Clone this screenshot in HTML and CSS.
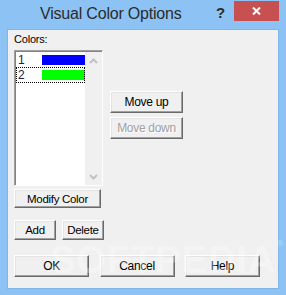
FILE: index.html
```html
<!DOCTYPE html>
<html lang="en">
    <head>
        <meta charset="UTF-8">
        <title>Visual Color Options</title>
        <link rel="stylesheet" href="styles.css">
    </head>
    <body>
        <div class="window">
            <div class="titlebar">
                <span class="title">Visual Color Options</span>
                <span class="help">?</span>
                <span class="close">
                    <svg width="9" height="8" viewBox="0 0 9 8">
                        <path d="M1 0.5 L8 7.5 M8 0.5 L1 7.5" stroke="#ffffff" stroke-width="2"/>
                    </svg>
                </span>
            </div>

            <div class="client">
                <div class="top">
                    <div class="left">
                        <div class="label">Colors:</div>
                        <div class="listbox">
                            <div class="items">
                                <div class="item"><span class="num">1</span><span class="swatch blue"></span></div>
                                <div class="item focus"><span class="num">2</span><span class="swatch green"></span></div>
                            </div>
                            <div class="scroll">
                                <svg width="9" height="6" viewBox="0 0 9 6">
                                    <path d="M1 5 L4.5 1.5 L8 5" fill="none" stroke="#c2c2c2" stroke-width="2"/>
                                </svg>
                                <svg width="9" height="6" viewBox="0 0 9 6">
                                    <path d="M1 1 L4.5 4.5 L8 1" fill="none" stroke="#c2c2c2" stroke-width="2"/>
                                </svg>
                            </div>
                        </div>
                        <button type="button" class="btn modify">Modify Color</button>
                        <div class="pair">
                            <button type="button" class="btn small">Add</button>
                            <button type="button" class="btn small">Delete</button>
                        </div>
                    </div>
                    <div class="right">
                        <button type="button" class="btn move">Move up</button>
                        <button type="button" class="btn move" disabled>Move down</button>
                    </div>
                </div>

                <div class="footer">
                    <button type="button" class="btn wide">OK</button>
                    <button type="button" class="btn wide">Cancel</button>
                    <button type="button" class="btn wide">Help</button>
                </div>
            </div>

            <!-- watermark from the screenshot site -->
            <div class="watermark">SOFTPEDIA<sup>®</sup></div>
        </div>
    </body>
</html>
```

FILE: styles.css
```css
*{
    margin: 0;
    padding: 0;
    box-sizing: border-box;
}
body{
    background-color: #8cc3f4;
    font-family: "Liberation Sans", Arial, sans-serif;
}
.window{
    position: relative;
    width: 286px;
    height: 295px;
    background-color: #8cc3f4;
    overflow: hidden;
}

/* title bar */
.titlebar{
    height: 30px;
    display: flex;
    align-items: flex-start;
}
.title{
    margin-left: 40px;
    margin-top: 5px;
    font-size: 16px;
    color: #2b2b2b;
    letter-spacing: -0.2px;
    width: 176px;
    white-space: nowrap;
}
.help{
    margin-top: 4px;
    font-size: 15px;
    font-weight: bold;
    color: #2b2b2b;
    width: 18px;
}
.close{
    margin-top: 1px;
    width: 45px;
    height: 20px;
    background-color: #c75050;
    display: flex;
    align-items: center;
    justify-content: center;
}

/* client area */
.client{
    margin: 0 8px;
    height: 258px;
    background-color: #f0f0f0;
    box-shadow: 0 0 0 1px #7fb6ea;
    padding: 0 6px;
    font-size: 11px;
    color: #000000;
}
.top{
    display: flex;
    height: 210px;
}
.left{
    width: 90px;
}
.label{
    padding-top: 3px;
    height: 20px;
    letter-spacing: -0.2px;
}
.listbox{
    width: 89px;
    height: 136px;
    display: flex;
    border: 1px solid;
    border-color: #a0a0a0 #ffffff #ffffff #a0a0a0;
    box-shadow: inset 1px 1px 0 #828282;
    background-color: #ffffff;
    padding: 1px 0 0 1px;
}
.items{
    width: 70px;
    padding-top: 1px;
}
.item{
    height: 14px;
    display: flex;
    align-items: center;
    padding-left: 2px;
}
.item.focus{
    height: 16px;
    outline: 1px dotted #000000;
    outline-offset: -1px;
}
.num{
    width: 24px;
    font-size: 12px;
    color: #2a1a3a;
}
.swatch{
    width: 43px;
    height: 10px;
}
.blue{
    background-color: #0000ff;
}
.green{
    background-color: #00ff00;
}
.scroll{
    width: 17px;
    background-color: #f0f0f0;
    display: flex;
    flex-direction: column;
    align-items: center;
    justify-content: space-between;
    padding: 6px 0 5px;
}

/* buttons */
.btn{
    font-family: "Liberation Sans", Arial, sans-serif;
    font-size: 11px;
    letter-spacing: -0.3px;
    color: #000000;
    background-color: #f0f0f0;
    border: 1px solid;
    border-color: #ffffff #696969 #696969 #ffffff;
    box-shadow: inset -1px -1px 0 #a0a0a0, inset 1px 1px 0 #e3e3e3;
    display: flex;
    align-items: center;
    justify-content: center;
}
.btn:disabled{
    color: #a0a0a0;
    text-shadow: 1px 1px 0 #ffffff;
}
.modify{
    margin-top: 3px;
    width: 87px;
    height: 19px;
    font-size: 11.5px;
}
.pair{
    margin-top: 12px;
    display: flex;
    gap: 6px;
}
.small{
    width: 42px;
    height: 20px;
    font-size: 11.5px;
}
.right{
    margin-left: 6px;
    padding-top: 61px;
    display: flex;
    flex-direction: column;
    gap: 4px;
}
.move{
    width: 73px;
    height: 22px;
    font-size: 12px;
}
.footer{
    margin-top: 15px;
    display: flex;
    gap: 10.5px;
}
.wide{
    width: 75px;
    height: 22px;
    font-size: 12px;
}

.watermark{
    position: absolute;
    left: 50px;
    top: 239px;
    font-size: 38px;
    font-weight: bold;
    letter-spacing: 1px;
    color: rgba(255, 255, 255, 0.3);
    pointer-events: none;
}
.watermark sup{
    font-size: 9px;
    vertical-align: top;
}
```
